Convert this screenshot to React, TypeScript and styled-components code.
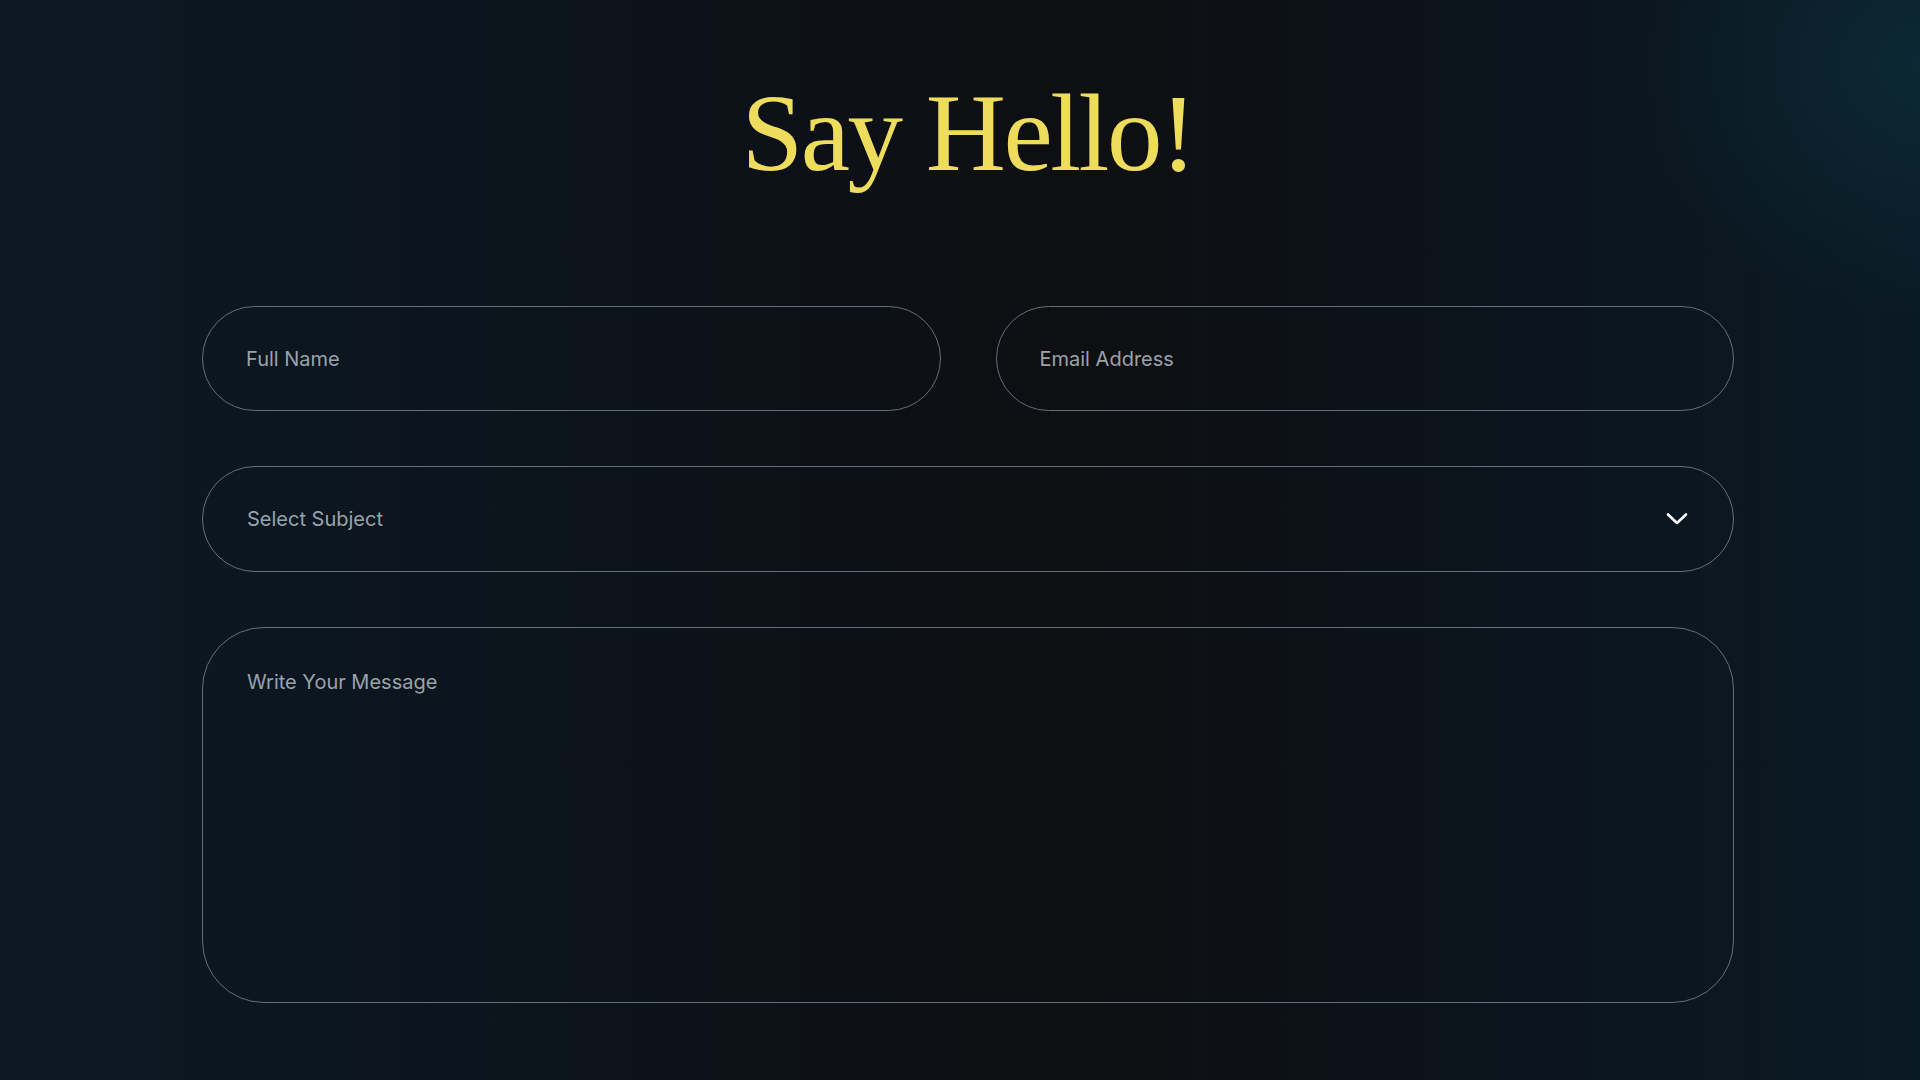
import styled, { createGlobalStyle } from "styled-components";

const GlobalStyle = createGlobalStyle`
  html, body {
    margin: 0;
    padding: 0;
  }
  body {
    background: #0c1118;
    font-family: Inter, "Noto Sans", sans-serif;
  }
`;

const Page = styled.main`
  min-height: 100vh;
  box-sizing: border-box;
  padding: 72px 186px 70px 202px;
  background:
    radial-gradient(ellipse 420px 360px at 100% 6%, rgba(14, 52, 64, 0.55), transparent 70%),
    linear-gradient(
      90deg,
      #0b1824 0%,
      #0c151e 22%,
      #0d1016 45%,
      #0e0f11 56%,
      #0c121a 72%,
      #0a1a25 100%
    );
  display: flex;
  flex-direction: column;
  align-items: stretch;
`;

const Title = styled.h1`
  margin: 0 0 112px;
  text-align: center;
  font-family: "Liberation Serif", "DejaVu Serif", serif;
  font-weight: 400;
  font-size: 111px;
  line-height: 1.1;
  letter-spacing: -2.5px;
  color: #eedc5c;
`;

const Form = styled.form`
  display: flex;
  flex-direction: column;
  gap: 55px;
`;

const Row = styled.div`
  display: grid;
  grid-template-columns: 1fr 1fr;
  gap: 55px;
`;

const fieldBase = `
  box-sizing: border-box;
  width: 100%;
  background: transparent;
  border: 1.5px solid #63707a;
  color: #c9d0d6;
  font-family: Inter, "Noto Sans", sans-serif;
  font-size: 20px;
  outline: none;
`;

const Field = styled.input`
  ${fieldBase}
  height: 105px;
  border-radius: 53px;
  padding: 0 43px;

  &::placeholder {
    color: #9aa3ab;
  }
`;

const SelectBox = styled.div`
  ${fieldBase}
  height: 106px;
  border-radius: 53px;
  padding: 0 44px 0 44px;
  display: flex;
  align-items: center;
  justify-content: space-between;
  color: #9aa3ab;
  cursor: pointer;
`;

const Chevron = styled.svg`
  width: 22px;
  height: 14px;
  margin-right: 1px;
`;

const Message = styled.textarea`
  ${fieldBase}
  height: 376px;
  border-radius: 62px;
  padding: 42px 44px;
  resize: none;
  line-height: 1.25;

  &::placeholder {
    color: #9aa3ab;
  }
`;

export default function App() {
  return (
    <>
      <GlobalStyle />
      <Page>
        <Title>Say Hello!</Title>
        <Form onSubmit={(e) => e.preventDefault()}>
          <Row>
            <Field type="text" placeholder="Full Name" />
            <Field type="email" placeholder="Email Address" />
          </Row>
          <SelectBox>
            <span>Select Subject</span>
            <Chevron viewBox="0 0 22 14" fill="none">
              <path
                d="M2 2.5 L11 11 L20 2.5"
                stroke="#ffffff"
                strokeWidth="2.6"
                strokeLinecap="round"
                strokeLinejoin="round"
              />
            </Chevron>
          </SelectBox>
          <Message placeholder="Write Your Message" />
        </Form>
      </Page>
    </>
  );
}
